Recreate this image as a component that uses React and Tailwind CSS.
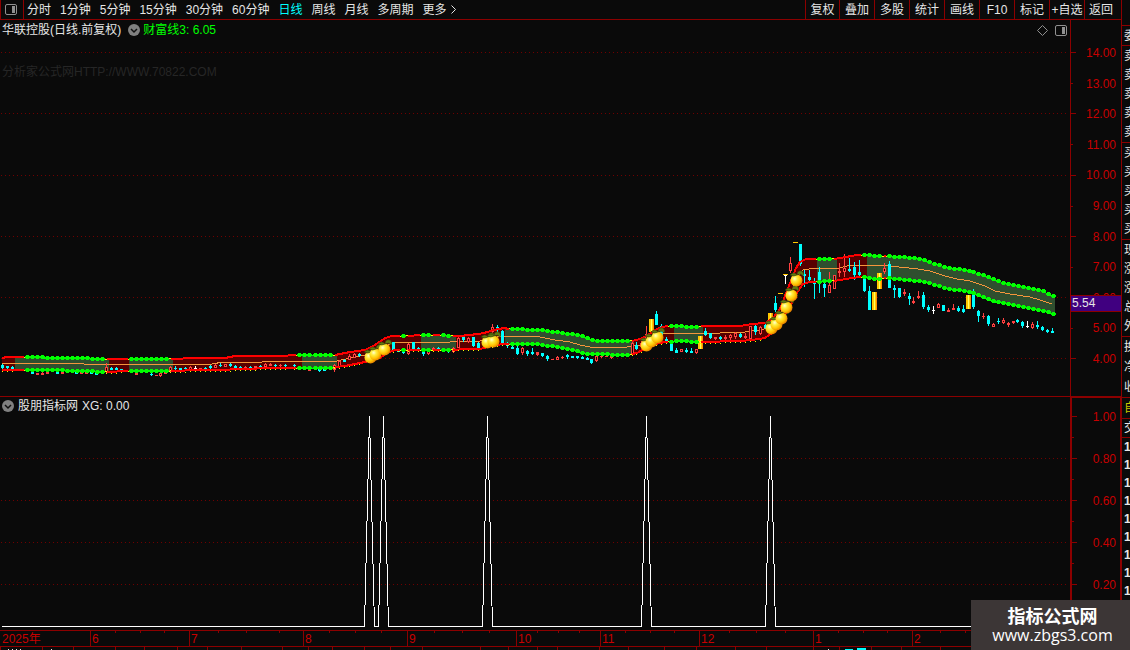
const PERIODS = [
  "分时",
  "1分钟",
  "5分钟",
  "15分钟",
  "30分钟",
  "60分钟",
  "日线",
  "周线",
  "月线",
  "多周期",
];

const TOOLS = ["叠加", "多股", "统计", "画线", "F10", "标记", "+自选"];

const PRICES = [14, 13, 12, 11, 10, 9, 8, 7, 6, 5, 4];
const PRICE_MAJOR = [52, 113, 175, 236, 297, 358];
const PRICE_MINOR = [83, 144, 206, 267, 328];
const XG_LEVELS = ["1.00", "0.80", "0.60", "0.40", "0.20"];
const XG_MAJOR = [416, 458, 500, 542, 584];
const XG_MINOR = [437, 479, 521, 563, 605];
const SIGNALS = [369, 383, 487, 646, 770];

// Width of each month cell on the time axis, with its week ticks
const MONTHS = [
  { label: "2025年", width: "w-[90px]", ticks: [] },
  { label: "6", width: "w-[99px]", ticks: [25, 50, 74] },
  { label: "7", width: "w-[114px]", ticks: [29, 57, 90] },
  { label: "8", width: "w-[104px]", ticks: [26, 52, 78] },
  { label: "9", width: "w-[109px]", ticks: [27, 55, 82] },
  { label: "10", width: "w-[84px]", ticks: [21, 42, 63] },
  { label: "11", width: "w-[99px]", ticks: [25, 50, 74] },
  { label: "12", width: "w-[114px]", ticks: [30, 57, 86] },
  { label: "1", width: "w-[99px]", ticks: [25, 50, 74] },
  { label: "2", width: "flex-1", ticks: [28, 53] },
];

const FOOT_TICKS = [
  0, 42, 73, 115, 144, 177, 207, 241, 282, 308, 332, 364, 390, 422, 480, 508,
  537, 557, 599, 628, 664, 696, 735, 766, 813, 839, 871, 901, 940,
];

const QUOTE_GROUPS = [
  { height: "h-[26px]", rows: [] },
  { height: "h-5", rows: ["委比"] },
  { height: "h-[97px]", rows: ["卖五", "卖四", "卖三", "卖二", "卖一"] },
  { height: "h-[97px]", rows: ["买一", "买二", "买三", "买四", "买五"] },
  { height: "h-[97px]", rows: ["现价", "涨跌", "涨幅", "总量", "外盘"] },
  { height: "h-[61px]", rows: ["换手", "净资", "收益"] },
  { height: "h-[21px]", rows: ["自选"], color: "text-[#c8c800]" },
  { height: "h-[19px]", rows: ["交易"] },
];

const UPPER = [
  [2, 358], [7, 357], [42, 357], [44, 358], [86, 358], [92, 359], [167, 359],
  [195, 358], [225, 358], [235, 356], [280, 356], [299, 355], [335, 355],
  [350, 352], [365, 350], [375, 345], [385, 338], [392, 336], [405, 336],
  [428, 335], [460, 336], [478, 334], [484, 333], [494, 330], [504, 328],
  [512, 329], [540, 330], [555, 332], [570, 334], [582, 336], [592, 340],
  [602, 341], [630, 341], [640, 339], [648, 335], [655, 330], [662, 327],
  [670, 326], [695, 327], [705, 326], [740, 326], [752, 324], [765, 323],
  [772, 319], [780, 309], [788, 288], [796, 268], [800, 262], [806, 259],
  [832, 259], [840, 258], [857, 255], [865, 255], [880, 256], [903, 257],
  [920, 259], [932, 263], [945, 267], [957, 269], [970, 271], [982, 275],
  [995, 280], [1007, 284], [1025, 287], [1042, 291], [1055, 297],
];

const LOWER = [
  [2, 370], [42, 370], [87, 371], [102, 372], [130, 371], [170, 371],
  [200, 370], [225, 370], [235, 369], [280, 368], [330, 368], [345, 366],
  [355, 364], [365, 362], [380, 358], [387, 353], [395, 350], [450, 350],
  [465, 349], [480, 349], [495, 345], [505, 344], [535, 344], [550, 346],
  [570, 349], [582, 353], [590, 354], [627, 355], [637, 353], [648, 347],
  [655, 344], [665, 342], [680, 341], [700, 342], [740, 341], [752, 340],
  [765, 338], [772, 333], [780, 323], [790, 307], [798, 291], [803, 284],
  [810, 282], [832, 281], [840, 280], [852, 278], [865, 277], [875, 279],
  [889, 278], [903, 280], [920, 281], [932, 284], [945, 288], [957, 290],
  [970, 292], [982, 297], [995, 302], [1010, 304], [1030, 308], [1045, 311],
  [1055, 315],
];

const MIDDLE = [
  [2, 363], [83, 363], [84, 364], [212, 364], [223, 362], [262, 362],
  [270, 361], [337, 361], [350, 358], [365, 355], [380, 348], [393, 343],
  [400, 342], [450, 342], [480, 341], [497, 337], [505, 336], [535, 336],
  [555, 340], [570, 342], [580, 345], [590, 347], [605, 348], [627, 347],
  [640, 345], [655, 336], [665, 333], [680, 333], [690, 334], [720, 333],
  [745, 332], [760, 330], [768, 328], [780, 314], [790, 295], [798, 276],
  [803, 270], [815, 268], [835, 269], [847, 266], [860, 265], [890, 266],
  [918, 269], [930, 271], [945, 276], [957, 279], [970, 281], [985, 286],
  [995, 291], [1010, 294], [1030, 297], [1040, 300], [1052, 304],
];

// Spans where the band is filled green instead of dark red
const GREEN_FILL = [
  [15, 109], [129, 173], [302, 337], [421, 456], [505, 634], [674, 703],
  [817, 837], [867, 1055],
];

// Spans where the band edges are drawn as green beads
const BEADS = [
  [27, 102], [131, 166], [299, 330], [403, 403], [423, 428], [443, 448],
  [512, 627], [671, 696], [819, 829], [864, 879], [889, 1053],
];

// [x, high, bodyTop, bodyBottom, low, kind]
const CANDLES = [
  [2, 364, 365, 367, 368, "c"], [7, 366, 366, 367, 368, "c"],
  [12, 366, 367, 368, 368, "c"], [32, 371, 372, 373, 373, "c"],
  [37, 373, 373, 374, 374, "R"], [42, 372, 373, 374, 374, "R"],
  [47, 372, 372, 373, 373, "R"], [57, 371, 372, 373, 373, "c"],
  [62, 371, 372, 373, 373, "R"], [76, 371, 372, 373, 373, "c"],
  [81, 371, 372, 373, 373, "R"], [86, 371, 372, 373, 373, "R"],
  [91, 371, 372, 373, 373, "c"], [96, 372, 373, 374, 374, "c"],
  [106, 363, 367, 371, 372, "r"], [111, 367, 368, 369, 369, "c"],
  [116, 367, 368, 369, 369, "c"], [121, 369, 369, 370, 370, "c"],
  [136, 372, 373, 374, 374, "R"], [151, 372, 374, 374, 375, "c"],
  [156, 375, 375, 375, 375, "R"], [160, 372, 373, 375, 376, "r"],
  [165, 372, 372, 373, 373, "R"], [170, 366, 367, 371, 371, "r"],
  [175, 366, 368, 368, 369, "c"], [180, 368, 368, 369, 370, "c"],
  [185, 367, 368, 368, 369, "c"], [190, 366, 367, 369, 369, "r"],
  [195, 366, 368, 368, 369, "w"], [200, 368, 368, 368, 368, "R"],
  [205, 367, 368, 369, 370, "c"], [210, 365, 366, 367, 368, "c"],
  [215, 364, 365, 367, 367, "r"], [220, 363, 365, 365, 366, "c"],
  [225, 364, 364, 366, 366, "r"], [230, 363, 364, 365, 366, "c"],
  [235, 365, 366, 367, 367, "c"], [240, 366, 367, 367, 368, "c"],
  [245, 366, 367, 367, 368, "R"], [250, 366, 367, 368, 368, "c"],
  [255, 366, 366, 367, 368, "R"], [260, 365, 366, 367, 368, "c"],
  [265, 363, 364, 366, 366, "r"], [270, 363, 364, 365, 365, "R"],
  [275, 364, 365, 365, 366, "c"], [280, 364, 365, 365, 366, "R"],
  [285, 364, 365, 365, 366, "c"], [294, 364, 365, 365, 366, "c"],
  [309, 369, 369, 370, 370, "R"], [319, 369, 369, 370, 371, "c"],
  [324, 369, 369, 370, 370, "c"], [334, 364, 365, 369, 371, "r"],
  [339, 360, 361, 366, 366, "r"], [344, 359, 360, 361, 361, "c"],
  [349, 354, 356, 359, 359, "r"], [354, 353, 354, 357, 357, "r"],
  [359, 353, 354, 355, 356, "c"], [393, 342, 342, 349, 350, "c"],
  [398, 349, 350, 351, 351, "c"], [403, 349, 350, 352, 353, "c"],
  [408, 343, 344, 353, 354, "r"], [413, 342, 342, 348, 348, "c"],
  [418, 347, 348, 349, 350, "c"], [423, 350, 351, 353, 355, "c"],
  [428, 349, 350, 353, 354, "r"], [433, 347, 348, 349, 350, "R"],
  [438, 347, 348, 349, 349, "c"], [448, 349, 350, 351, 352, "c"],
  [453, 347, 348, 351, 352, "r"], [458, 336, 338, 347, 347, "r"],
  [463, 336, 337, 339, 341, "c"], [468, 337, 338, 341, 342, "r"],
  [473, 337, 337, 345, 346, "c"], [478, 342, 343, 347, 347, "c"],
  [492, 324, 327, 331, 332, "r"], [497, 325, 327, 329, 331, "c"],
  [502, 330, 331, 343, 344, "c"], [507, 342, 344, 345, 347, "c"],
  [512, 345, 347, 348, 348, "c"], [517, 346, 348, 353, 354, "c"],
  [522, 347, 348, 352, 354, "r"], [527, 350, 351, 353, 355, "c"],
  [532, 348, 352, 353, 354, "c"], [537, 352, 352, 354, 355, "R"],
  [542, 353, 353, 355, 356, "c"], [547, 355, 356, 358, 360, "c"],
  [552, 359, 359, 359, 359, "R"], [557, 356, 357, 359, 359, "r"],
  [562, 356, 357, 357, 358, "R"], [567, 354, 355, 356, 358, "c"],
  [572, 356, 356, 357, 357, "c"], [577, 356, 356, 357, 358, "c"],
  [582, 356, 357, 358, 358, "c"], [587, 357, 358, 359, 359, "c"],
  [591, 359, 359, 362, 363, "c"], [596, 355, 356, 360, 361, "r"],
  [601, 355, 356, 356, 357, "R"], [606, 356, 356, 356, 356, "R"],
  [611, 355, 355, 357, 358, "R"], [632, 342, 343, 354, 355, "r"],
  [636, 342, 345, 348, 349, "c"], [641, 341, 343, 346, 346, "r"],
  [646, 326, 334, 340, 340, "r"], [651, 319, 319, 331, 331, "y"],
  [656, 311, 314, 324, 324, "c"], [661, 324, 326, 334, 335, "c"],
  [666, 337, 339, 340, 340, "c"], [671, 343, 344, 350, 350, "c"],
  [676, 348, 350, 352, 352, "c"], [681, 349, 349, 351, 351, "r"],
  [686, 348, 350, 351, 352, "c"], [691, 348, 351, 352, 352, "c"],
  [696, 349, 349, 352, 353, "r"], [700, 336, 336, 348, 348, "y"],
  [705, 328, 331, 334, 335, "c"], [710, 333, 333, 337, 338, "c"],
  [715, 337, 337, 338, 339, "R"], [720, 336, 337, 338, 339, "c"],
  [725, 335, 337, 338, 339, "R"], [730, 334, 335, 337, 339, "r"],
  [735, 332, 333, 336, 338, "r"], [740, 333, 334, 336, 337, "c"],
  [745, 333, 336, 337, 338, "R"], [750, 326, 326, 338, 338, "r"],
  [755, 325, 326, 331, 334, "c"], [760, 326, 327, 333, 334, "r"],
  [765, 324, 325, 327, 328, "c"], [770, 313, 313, 321, 321, "y"],
  [775, 296, 303, 309, 311, "c"], [780, 293, 293, 293, 293, "y"],
  [785, 275, 275, 275, 283, "w"], [785, 274, 274, 274, 274, "y"],
  [790, 257, 263, 270, 272, "r"], [795, 242, 242, 242, 242, "y"],
  [800, 244, 244, 263, 265, "c"], [804, 270, 274, 275, 286, "c"],
  [809, 270, 277, 279, 281, "c"], [814, 278, 282, 283, 298, "c"],
  [819, 267, 272, 282, 292, "c"], [824, 281, 284, 287, 296, "c"],
  [829, 272, 285, 292, 292, "r"], [834, 275, 275, 288, 288, "r"],
  [839, 263, 271, 272, 276, "R"], [844, 254, 268, 271, 276, "r"],
  [849, 258, 269, 270, 271, "c"], [854, 262, 267, 274, 279, "c"],
  [859, 260, 272, 274, 276, "c"], [864, 278, 279, 290, 291, "c"],
  [869, 286, 291, 309, 309, "c"], [874, 292, 292, 309, 309, "y"],
  [879, 273, 273, 288, 288, "y"], [884, 263, 268, 271, 273, "r"],
  [889, 261, 264, 287, 287, "c"], [894, 285, 288, 289, 297, "c"],
  [899, 288, 288, 296, 297, "c"], [904, 289, 292, 293, 295, "R"],
  [909, 293, 296, 298, 304, "c"], [913, 297, 301, 302, 303, "R"],
  [918, 291, 296, 297, 298, "R"], [923, 292, 295, 306, 308, "c"],
  [928, 305, 307, 309, 311, "c"], [933, 306, 310, 310, 313, "w"],
  [938, 303, 304, 307, 307, "r"], [943, 305, 305, 310, 310, "c"],
  [948, 308, 310, 311, 311, "R"], [953, 304, 308, 309, 309, "R"],
  [958, 306, 308, 310, 311, "c"], [963, 305, 309, 311, 312, "c"],
  [968, 295, 295, 308, 308, "y"], [973, 289, 293, 306, 308, "c"],
  [978, 310, 311, 315, 321, "c"], [983, 313, 316, 316, 318, "R"],
  [988, 315, 316, 323, 325, "c"], [993, 323, 324, 326, 326, "r"],
  [998, 318, 321, 321, 323, "c"], [1003, 318, 320, 322, 323, "r"],
  [1008, 322, 323, 324, 326, "R"], [1013, 321, 321, 322, 323, "R"],
  [1017, 319, 320, 321, 322, "c"], [1022, 321, 322, 325, 327, "c"],
  [1027, 321, 326, 326, 327, "w"], [1032, 322, 324, 327, 328, "r"],
  [1037, 321, 325, 326, 328, "c"], [1042, 326, 327, 329, 330, "c"],
  [1047, 329, 330, 331, 332, "c"], [1052, 328, 331, 332, 332, "c"],
];

const FRUITS = [
  [370, 357], [375, 354], [384, 349], [487, 342], [493, 341], [646, 345],
  [651, 341], [657, 337], [771, 328], [776, 324], [781, 318], [786, 307],
  [791, 295], [796, 280],
];

const COLORS = {
  c: "#00ffff",
  r: "#ff4040",
  R: "#ff4040",
  w: "#ffffff",
  y: "#ffc800",
};

const toPoints = (line) => line.map((p) => p.join(",")).join(" ");

// Linear interpolation of a band edge at x
const valueAt = (line, x) => {
  const i = line.findIndex((p) => p[0] >= x);
  if (i <= 0) return line[0][1];
  const [x0, y0] = line[i - 1];
  const [x1, y1] = line[i];
  return Math.round(y0 + ((y1 - y0) * (x - x0)) / (x1 - x0));
};

const edgeSlice = (line, from, to) => [
  [from, valueAt(line, from)],
  ...line.filter((p) => p[0] > from && p[0] < to),
  [to, valueAt(line, to)],
];

const beadXs = BEADS.flatMap(([from, to]) => {
  const count = Math.round((to - from) / 4.96);
  return Array.from({ length: count + 1 }, (_, i) =>
    count ? Math.round(from + ((to - from) * i) / count) : from
  );
});

// Pieces of the band edges left between the beaded spans
const RED_SPANS = [...BEADS, [1060, 1060]]
  .map(([from], i) => [i ? BEADS[i - 1][1] + 5 : 2, from - 3])
  .filter(([from, to]) => to > from && from < 1050);

const BAND = toPoints([...UPPER, ...[...LOWER].reverse()]);

const PanelIcon = ({ className }) => (
  <svg className={className} viewBox="0 0 12 11" fill="none">
    <rect x="0.5" y="0.5" width="11" height="10" rx="1.5" stroke="currentColor" />
    <rect x="7" y="2" width="3" height="7" fill="currentColor" />
  </svg>
);

const CollapseButton = ({ label }) => (
  <button aria-label={label} className="h-3 w-3 shrink-0">
    <svg className="h-3 w-3" viewBox="0 0 12 12" fill="none">
      <circle cx="6" cy="6" r="6" fill="#808080" />
      <path d="M3 5l3 3 3-3" stroke="#101010" strokeWidth="1.5" />
    </svg>
  </button>
);

const GridLines = ({ levels }) =>
  levels.map((y) => (
    <line
      key={y}
      x1="1"
      x2="1067"
      y1={y + 0.5}
      y2={y + 0.5}
      stroke="#700000"
      strokeDasharray="1 3"
    />
  ));

const AxisTicks = ({ major, minor }) => (
  <g fill="#8c0000">
    {major.map((y) => (
      <rect key={y} x="0" y={y} width="5" height="1" />
    ))}
    {minor.map((y) => (
      <rect key={y} x="0" y={y} width="2" height="1" />
    ))}
  </g>
);

const Candle = ({ data }) => {
  const [x, high, top, bottom, low, kind] = data;
  const color = COLORS[kind];
  const height = bottom - top + 1;

  if (kind === "y") {
    return (
      <g>
        <rect x={x - 2} y={top} width="5" height={height} fill={color} />
        {height > 1 && (
          <rect x={x} y={top} width="1" height={height} fill="#ffff60" />
        )}
        {height > 1 && (
          <rect x={x + 2} y={top} width="1" height={height} fill="#ff8c00" />
        )}
      </g>
    );
  }

  return (
    <g fill={color}>
      <rect x={x} y={high} width="1" height={low - high + 1} />
      <rect x={x - 1} y={top} width="3" height={height} />
      {kind === "r" && height > 2 && (
        <rect x={x} y={top + 1} width="1" height={height - 2} fill="#180404" />
      )}
    </g>
  );
};

const Fruit = ({ x, y }) => (
  <g>
    <circle cx={x + 0.5} cy={y + 0.5} r="6" fill="url(#fruit)" />
    <path
      d={`M${x + 1} ${y - 5}q-3 -4 -7 0q4 2 7 0q0 -5 5 -4q3 3 1 5q-2 -3 -6 -1z`}
      fill="#5f7a10"
      stroke="#2c3408"
      strokeWidth="0.5"
    />
  </g>
);

const PriceChart = () => (
  <svg
    className="block h-full w-full"
    viewBox="0 20 1070 376"
    preserveAspectRatio="none"
  >
    <defs>
      <radialGradient id="fruit" cx="0.35" cy="0.35" r="0.7">
        <stop offset="0" stopColor="#ffffd0" />
        <stop offset="0.3" stopColor="#ffee40" />
        <stop offset="0.7" stopColor="#ffc000" />
        <stop offset="1" stopColor="#e07800" />
      </radialGradient>
      <clipPath id="greenSpans">
        {GREEN_FILL.map(([from, to]) => (
          <rect key={from} x={from} y="20" width={to - from} height="376" />
        ))}
      </clipPath>
    </defs>
    <GridLines levels={PRICE_MAJOR} />
    <g shapeRendering="crispEdges">
      <polygon points={BAND} fill="#580000" />
      <polygon points={BAND} fill="#2f4f2f" clipPath="url(#greenSpans)" />
      <polyline points={toPoints(MIDDLE)} fill="none" stroke="#f5963c" />
      {CANDLES.map((c) => (
        <Candle key={`${c[0]}-${c[1]}`} data={c} />
      ))}
      {[UPPER, LOWER].map((line, n) => (
        <g key={n} fill="none">
          <polyline points={toPoints(edgeSlice(line, 2, 1054))} stroke="#ffff00" />
          {RED_SPANS.map(([from, to]) => (
            <polyline
              key={from}
              points={toPoints(edgeSlice(line, from, to))}
              stroke="#ff0000"
              strokeWidth="2"
            />
          ))}
          {BEADS.map(([from, to]) => (
            <polyline
              key={from}
              points={toPoints(edgeSlice(line, from - 1, Math.min(to + 2, 1054)))}
              stroke="#00ff00"
            />
          ))}
          {beadXs.map((x) => {
            const y = valueAt(line, x);
            return (
              <path
                key={x}
                d={`M${x - 1} ${y - 2}h3v1h1v2h-1v1h-3v-1h-1v-2h1z`}
                fill="#00ff00"
              />
            );
          })}
        </g>
      ))}
      {/* yellow specks under the lower edge where it runs red */}
      {CANDLES.filter(
        ([x]) => x < 765 && !BEADS.some(([a, b]) => x > a - 3 && x < b + 3)
      ).map(([x]) => (
        <rect
          key={x}
          x={x}
          y={valueAt(LOWER, x) + 1}
          width="1"
          height="1"
          fill="#ffff00"
        />
      ))}
    </g>
    {FRUITS.map(([x, y]) => (
      <Fruit key={x} x={x} y={y} />
    ))}
  </svg>
);

const SignalChart = () => (
  <svg
    className="block h-full w-full"
    viewBox="0 397 1070 233"
    preserveAspectRatio="none"
  >
    <GridLines levels={XG_MAJOR.slice(1)} />
    <polyline
      points={`2,626.5 ${SIGNALS.map(
        (x) => `${x - 4.5},626.5 ${x + 0.5},416 ${x + 5.5},626.5`
      ).join(" ")} 1054,626.5`}
      fill="none"
      stroke="#ffffff"
      strokeLinejoin="bevel"
      shapeRendering="crispEdges"
    />
  </svg>
);

const Toolbar = () => (
  <header className="flex h-5 border-b border-[#8c0000] text-[#e6e6e6]">
    <button
      aria-label="侧栏"
      className="flex w-6 shrink-0 items-center border-x border-[#8c0000] pl-1 text-[#909090]"
    >
      <PanelIcon className="h-[11px] w-3" />
    </button>
    <nav className="flex flex-1 gap-[9px] pl-[3px] whitespace-nowrap">
      {PERIODS.map((name) => (
        <button key={name} className={name === "日线" ? "text-[#00ffff]" : ""}>
          {name}
        </button>
      ))}
      <button className="flex items-center gap-1">
        更多
        <svg className="h-[9px] w-[5px]" viewBox="0 0 5 9" fill="none">
          <path d="M0.5 0.5l4 4-4 4" stroke="currentColor" />
        </svg>
      </button>
    </nav>
    <div className="flex whitespace-nowrap">
      <button className="w-[34px] border-l border-[#8c0000]">复权</button>
      {TOOLS.map((name) => (
        <button key={name} className="w-[35px] border-l border-[#8c0000]">
          {name}
        </button>
      ))}
      <button className="w-[37px] border-l border-[#8c0000] pr-1">返回</button>
    </div>
  </header>
);

const QuoteStrip = () => (
  <aside className="w-[9px] shrink-0 overflow-hidden border-l border-[#8c0000] text-[#e6e6e6]">
    {QUOTE_GROUPS.map(({ height, rows, color }, i) => (
      <div
        key={i}
        className={`flex flex-col justify-around border-b border-[#8c0000] pl-0.5 leading-4 whitespace-nowrap ${height} ${
          color || ""
        }`}
      >
        {rows.map((row) => (
          <span key={row}>{row}</span>
        ))}
      </div>
    ))}
    <div className="flex flex-col pl-0.5 leading-[18px] font-bold">
      {Array.from({ length: 9 }, (_, i) => (
        <span key={i}>1</span>
      ))}
    </div>
  </aside>
);

export default function App() {
  return (
    <div className="relative flex max-h-screen overflow-hidden bg-[#0a0a0a] font-['Liberation_Sans','Noto_Sans_CJK_SC',sans-serif] text-[12px] leading-4">
      <main className="min-w-0 flex-1">
        <Toolbar />

        <section className="flex h-[377px] border-b border-[#8c0000]">
          <div className="relative min-w-0 flex-1">
            <PriceChart />
            <div className="absolute inset-x-0 top-0 flex items-center pt-0.5 pl-0.5 text-[#e6e6e6]">
              <h1>华联控股(日线.前复权)</h1>
              <div className="flex items-center gap-[3px] pl-[7px]">
                <CollapseButton label="指标" />
                <span className="text-[#00ff00]">财富线3: 6.05</span>
              </div>
              <div className="ml-auto flex items-center gap-[7px] pr-[3px] text-[#909090]">
                <button aria-label="标记">
                  <svg className="h-[11px] w-[11px]" viewBox="0 0 11 11" fill="none">
                    <path d="M5.5 0.5l5 5-5 5-5-5z" stroke="currentColor" />
                  </svg>
                </button>
                <button aria-label="面板">
                  <PanelIcon className="h-[11px] w-3" />
                </button>
              </div>
            </div>
            <p className="absolute top-11 left-0.5 text-[#262626]">
              分析家公式网HTTP://WWW.70822.COM
            </p>
          </div>
          <div className="relative w-[51px] shrink-0 border-l border-[#8c0000] text-[#c80000]">
            <svg className="absolute top-0 left-0 h-[376px] w-[5px]" viewBox="0 20 5 376">
              <AxisTicks major={PRICE_MAJOR} minor={PRICE_MINOR} />
            </svg>
            <div className="flex h-[347px] flex-col justify-between pt-[25px] pr-[5px] text-right">
              {PRICES.map((p) => (
                <span key={p}>{p.toFixed(2)}</span>
              ))}
            </div>
            <div className="absolute inset-x-0 top-[275px] border-y border-[#8c0000] bg-[#400080] pl-px leading-[15px] text-[#e6e6e6]">
              5.54
            </div>
          </div>
        </section>

        <section className="flex h-[233px]">
          <div className="relative min-w-0 flex-1">
            <SignalChart />
            <div className="absolute top-0 left-0.5 flex items-center gap-1 pt-px text-[#e6e6e6]">
              <CollapseButton label="副图指标" />
              <h2>股朋指标网</h2>
              <span>XG: 0.00</span>
            </div>
          </div>
          <div className="relative w-[51px] shrink-0 border-t border-r border-l-2 border-[#8c0000] text-[#c80000]">
            <svg className="absolute -top-px left-0 h-[233px] w-[5px]" viewBox="0 397 5 233">
              <AxisTicks major={XG_MAJOR} minor={XG_MINOR} />
            </svg>
            <div className="flex flex-col gap-[26px] pt-[11px] pr-1 text-right">
              {XG_LEVELS.map((level) => (
                <span key={level}>{level}</span>
              ))}
            </div>
          </div>
        </section>

        <div className="flex h-[17px] border-y border-[#8c0000] text-[#c80000]">
          {MONTHS.map(({ label, width, ticks }, i) => (
            <div
              key={label}
              className={`relative leading-4 ${width} ${
                i ? "border-l border-[#8c0000] pl-px" : "pl-0.5"
              }`}
            >
              {label}
              <svg className="absolute top-0 left-0 h-0.5 w-full" fill="#8c0000">
                {ticks.map((x) => (
                  <rect key={x} x={x - 1} y="0" width="1" height="2" />
                ))}
              </svg>
            </div>
          ))}
        </div>

        <svg className="block h-[3px] w-full" fill="#8c0000">
          {FOOT_TICKS.map((x) => (
            <rect key={x} x={x} y="0" width="1" height="3" />
          ))}
          <path d="M8 2h1v1h-1zM12 2h1v1h-1zM16 2h1v1h-1zM20 2h1v1h-1zM51 2h1v1h-1zM828 2h1v1h-1z" fill="#e6e6e6" />
          <path d="M845 2h8v1h-8zM857 1h9v2h-9z" fill="#00ffff" />
        </svg>
      </main>

      <QuoteStrip />

      <div className="absolute right-0 bottom-0 flex h-[50px] w-[159px] flex-col items-center justify-center bg-[#3c3636] pl-1 text-white">
        <strong className="font-['Noto_Sans_CJK_SC',sans-serif] text-[18px] leading-5">
          指标公式网
        </strong>
        <a href="#" className="font-['Open_Sans',sans-serif] text-[16px] leading-5">
          www.zbgs3.com
        </a>
      </div>
    </div>
  );
}
